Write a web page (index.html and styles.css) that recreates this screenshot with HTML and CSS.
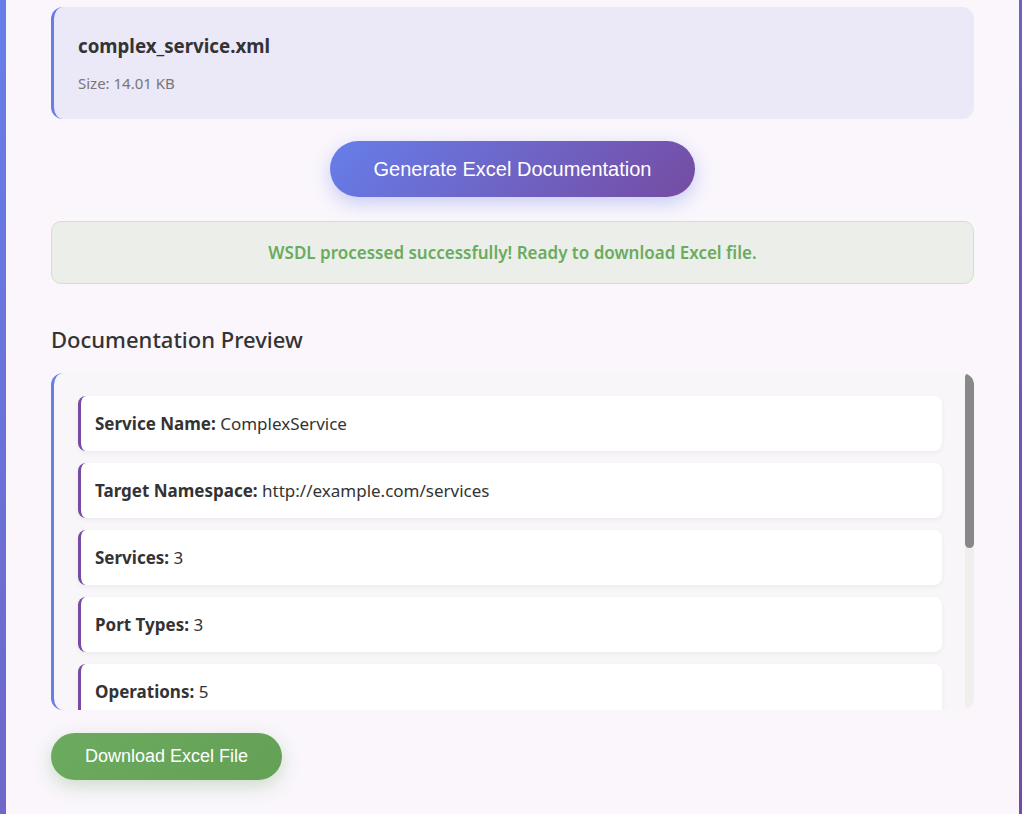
FILE: index.html
```html
<!DOCTYPE html>
<html>
<head>
<meta charset="utf-8">
<link rel="stylesheet" href="styles.css">
</head>
<body>
<div class="container">
  <div class="file-info">
    <div class="file-name">complex_service.xml</div>
    <div class="file-size">Size: 14.01 KB</div>
  </div>
  <div class="actions">
    <button class="btn-generate">Generate Excel Documentation</button>
  </div>
  <div class="success">WSDL processed successfully! Ready to download Excel file.</div>
  <h2 class="preview-title">Documentation Preview</h2>
  <div class="preview">
    <div class="preview-list">
      <div class="item"><strong>Service Name:</strong> ComplexService</div>
      <div class="item"><strong>Target Namespace:</strong> http://example.com/services</div>
      <div class="item"><strong>Services:</strong> 3</div>
      <div class="item"><strong>Port Types:</strong> 3</div>
      <div class="item"><strong>Operations:</strong> 5</div>
      <div class="item"><strong>Messages:</strong> 10</div>
      <div class="item"><strong>Bindings:</strong> 3</div>
      <div class="item"><strong>Complex Types:</strong> 8</div>
      <div class="item"><strong>Elements:</strong> 12</div>
    </div>
    <div class="scroll-track"><div class="scroll-thumb"></div></div>
  </div>
  <div class="download-row">
    <button class="btn-download">Download Excel File</button>
  </div>
</div>
</body>
</html>
```
FILE: styles.css
```css
html, body {
  margin: 0;
  padding: 0;
  height: 100%;
}
body {
  background: linear-gradient(135deg, #667eea 0%, #764ba2 100%);
  font-family: "Noto Sans", "Open Sans", sans-serif;
  color: #333;
  overflow: hidden;
}
.container {
  margin-left: 6px;
  width: 1013px;
  min-height: 814px;
  box-sizing: border-box;
  background: #faf6fc;
  padding: 7px 45px 40px 45px;
}
.file-info {
  background: #ebe8f8;
  border-left: 3px solid #667eea;
  border-radius: 12px;
  padding: 24px 24px 0 24px;
  height: 112px;
  box-sizing: border-box;
}
.file-name {
  font-size: 18.7px;
  font-weight: 700;
  color: #333;
  line-height: 30px;
}
.file-size {
  margin-top: 12px;
  font-size: 15px;
  color: #777;
  line-height: 20px;
}
.actions {
  display: flex;
  justify-content: center;
  margin-top: 22px;
}
.btn-generate {
  width: 365px;
  height: 56px;
  border: none;
  border-radius: 28px;
  background: linear-gradient(135deg, #667eea 0%, #764ba2 100%);
  color: #fff;
  font-family: "Liberation Sans", Arial, sans-serif;
  font-size: 20px;
  box-shadow: 0 6px 18px rgba(102, 126, 234, 0.35);
  cursor: pointer;
}
.success {
  margin-top: 24px;
  height: 63px;
  box-sizing: border-box;
  background: #ecefe9;
  border: 1px solid #cfe2cb;
  border-radius: 10px;
  display: flex;
  align-items: center;
  justify-content: center;
  color: #6aab5e;
  font-size: 17px;
  font-weight: 600;
}
.preview-title {
  margin: 39px 0 18px 0;
  font-size: 22px;
  font-weight: 500;
  color: #333;
  line-height: 32px;
}
.preview {
  height: 337px;
  box-sizing: border-box;
  overflow: hidden;
  background: #f8f6f8;
  border-left: 3px solid #667eea;
  border-radius: 12px;
  display: flex;
}
.preview-list {
  flex: 1;
  padding: 23px 23px 23px 24px;
  display: flex;
  flex-direction: column;
  gap: 12px;
  overflow: hidden;
}
.scroll-track {
  flex: none;
  width: 9px;
  background: #f1eeee;
  border-radius: 5px;
}
.scroll-thumb {
  height: 175px;
  background: #888;
  border-radius: 5px;
}
.item {
  flex: none;
  background: #fff;
  border-left: 3px solid #764ba2;
  border-radius: 8px;
  height: 55px;
  box-sizing: border-box;
  padding: 0 14px;
  display: flex;
  align-items: center;
  font-size: 17px;
  color: #333;
  box-shadow: 0 2px 5px rgba(0, 0, 0, 0.05);
  white-space: pre;
}
.item strong {
  font-weight: 700;
}
.download-row {
  margin-top: 23px;
  display: flex;
}
.btn-download {
  width: 231px;
  height: 47px;
  border: none;
  border-radius: 24px;
  background: linear-gradient(135deg, #6cab5f 0%, #64a056 100%);
  color: #fff;
  font-family: "Liberation Sans", Arial, sans-serif;
  font-size: 18px;
  box-shadow: 0 6px 18px rgba(100, 160, 86, 0.3);
  cursor: pointer;
}
```
